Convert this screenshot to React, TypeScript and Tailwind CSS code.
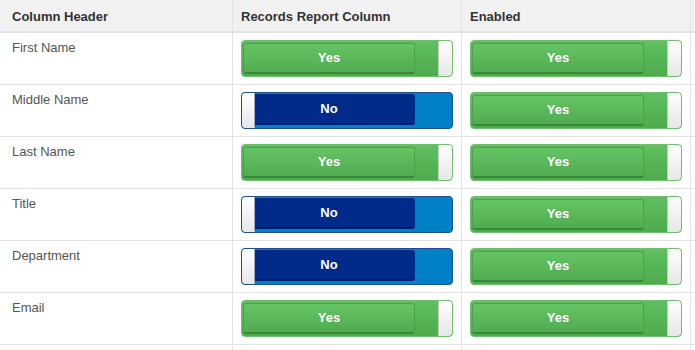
import React from 'react';

type Row = { label: string; report: boolean; enabled: boolean };

const rows: Row[] = [
  { label: 'First Name', report: true, enabled: true },
  { label: 'Middle Name', report: false, enabled: true },
  { label: 'Last Name', report: true, enabled: true },
  { label: 'Title', report: false, enabled: true },
  { label: 'Department', report: false, enabled: true },
  { label: 'Email', report: true, enabled: true },
];

function Toggle({ on }: { on: boolean }) {
  if (on) {
    return (
      <div className="flex h-[37px] w-full rounded-[4px] border border-[#6fbf6f] bg-gradient-to-b from-[#5fbf5f] to-[#4eab4e] overflow-hidden">
        <div className="py-[2px] pl-[1px]">
          <div className="flex h-full w-[172px] items-center justify-center rounded-[3px] border border-[#4aa34a] border-b-2 border-b-[#3a873a] bg-gradient-to-b from-[#64c464] to-[#52ac52] text-[13px] font-bold text-white">
            Yes
          </div>
        </div>
        <div className="flex-1" />
        <div className="w-[14px] h-full rounded-r-[3px] border-l border-[#c8c8c8] bg-gradient-to-b from-white to-[#e6e6e6]" />
      </div>
    );
  }
  return (
    <div className="flex h-[37px] w-full rounded-[4px] border border-[#22508f] bg-[#0080c6] overflow-hidden">
      <div className="w-[13px] h-full rounded-l-[3px] border-r border-[#9aa9c4] bg-gradient-to-b from-white to-[#e6e6e6]" />
      <div className="pt-[1px] pb-[3px]">
        <div className="flex h-full w-[160px] items-center justify-center rounded-r-[3px] border-b-2 border-[#00206c] bg-[#002b8a] pr-[12px] text-[13px] font-bold text-white">
          No
        </div>
      </div>
      <div className="flex-1" />
    </div>
  );
}

export default function App() {
  return (
    <div className="w-[695px] h-[350px] overflow-hidden bg-white font-['Liberation_Sans',Arial,sans-serif] text-[13px]">
      <div className="flex h-[33px] border-b-2 border-[#e3e3e3] bg-[#f1f1f1] font-bold text-[#333]">
        <div className="w-[233px] border-r border-[#e3e3e3] pl-[12px] pt-[7px]">Column Header</div>
        <div className="w-[229px] border-r border-[#e3e3e3] pl-[8px] pt-[7px]">Records Report Column</div>
        <div className="w-[229px] border-r border-[#e3e3e3] pl-[8px] pt-[7px]">Enabled</div>
      </div>
      {rows.map((r) => (
        <div key={r.label} className="flex h-[52px] border-b border-[#e3e3e3] text-[#555]">
          <div className="w-[233px] border-r border-[#e3e3e3] pl-[12px] pt-[6px] leading-[18px]">{r.label}</div>
          <div className="w-[229px] border-r border-[#e3e3e3] px-[8px] pt-[7px]">
            <Toggle on={r.report} />
          </div>
          <div className="w-[229px] border-r border-[#e3e3e3] px-[8px] pt-[7px]">
            <Toggle on={r.enabled} />
          </div>
        </div>
      ))}
      <div className="flex h-[20px]">
        <div className="w-[233px] border-r border-[#e3e3e3]" />
        <div className="w-[229px] border-r border-[#e3e3e3]" />
        <div className="w-[229px] border-r border-[#e3e3e3]" />
      </div>
    </div>
  );
}
